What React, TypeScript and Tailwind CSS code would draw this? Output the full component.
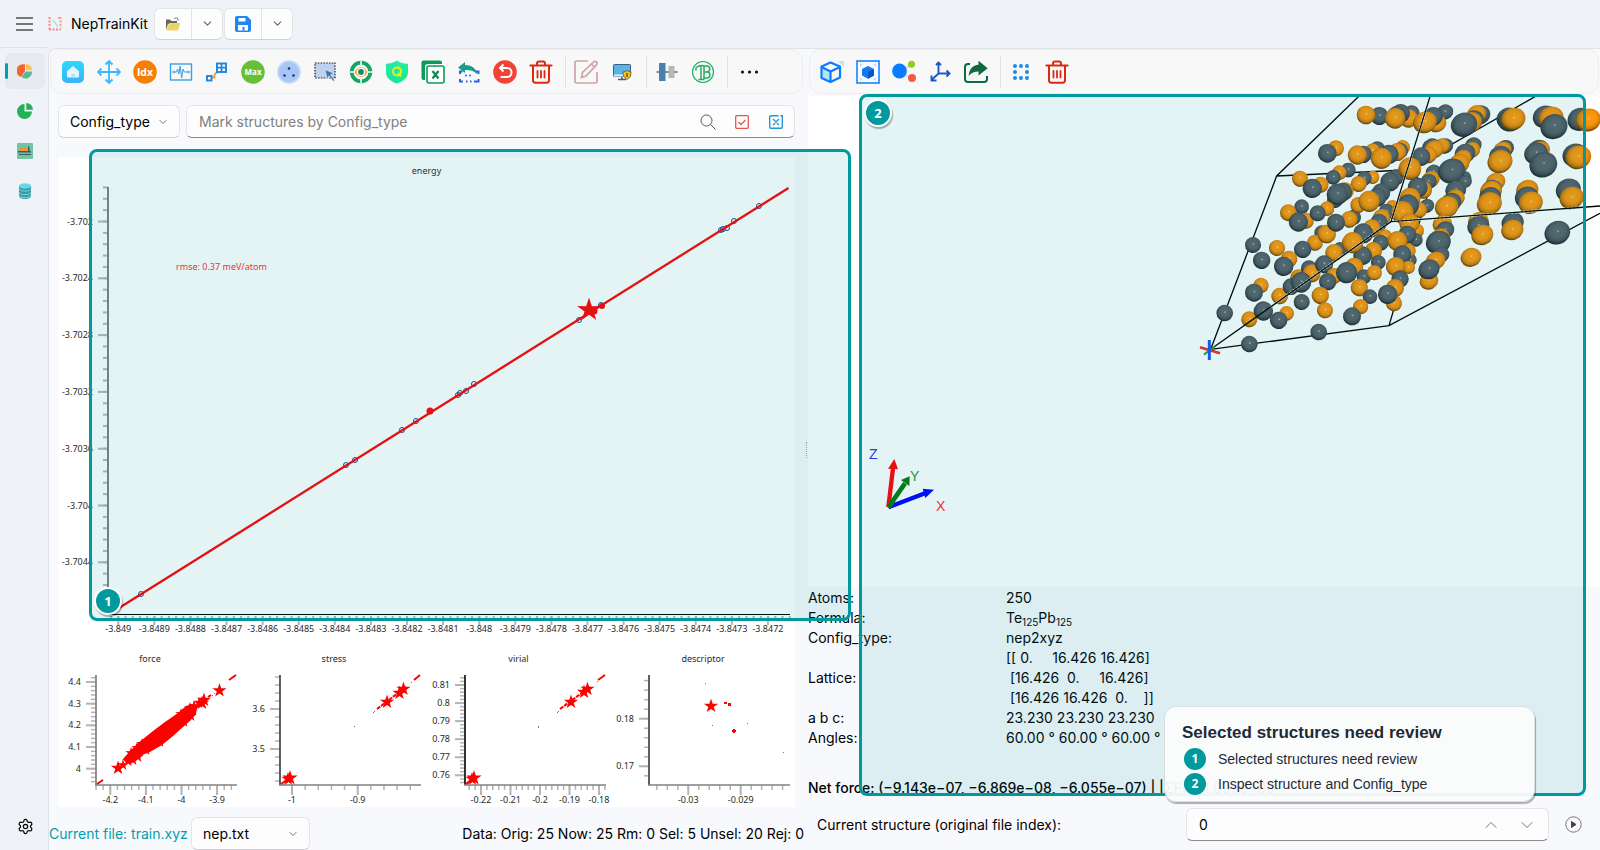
import React from "react";
import { ChevronDown, ChevronUp, Settings } from "lucide-react";

type Kids = { children: React.ReactNode };

/* ---------- icons ---------- */

function Icon({ children, size = 24 }: Kids & { size?: number }) {
  return (
    <svg width={size} height={size} viewBox="0 0 24 24" fill="none" aria-hidden="true">
      {children}
    </svg>
  );
}

const HomeIcon = () => (
  <Icon>
    <defs>
      <linearGradient id="home" x1="0" y1="0" x2="0" y2="1">
        <stop offset="0" stopColor="#2fd8fb" />
        <stop offset="1" stopColor="#37b3fb" />
      </linearGradient>
    </defs>
    <rect x="1" y="1" width="22" height="22" rx="5" fill="url(#home)" />
    <path d="M12 6l6 5.2v5.300a1 1 0 0 1-1 1H7a1 1 0 0 1-1-1v-5.300z" fill="#e2f5ff" />
    <path d="M10.500 17.500v-3.500h3v3.500z" fill="#a9e0fb" />
  </Icon>
);
const MoveIcon = () => (
  <Icon>
    <path d="M12 1v22M1 12h22M8.5 4.5L12 1l3.500 3.500M8.500 19.500L12 23l3.500-3.500M4.500 8.500L1 12l3.500 3.500M19.500 8.500L23 12l-3.500 3.500" stroke="#3db8fb" strokeWidth="1.800" />
  </Icon>
);
const IdxIcon = () => (
  <Icon>
    <circle cx="12" cy="12" r="11.800" fill="#f57f05" />
    <text x="12" y="15.500" textAnchor="middle" fontSize="10.500" fontWeight="700" fontFamily="Open Sans, sans-serif" fill="#fff">Idx</text>
  </Icon>
);
const WaveIcon = () => (
  <Icon>
    <rect x="1.500" y="4" width="21" height="16" stroke="#3c9fe0" strokeWidth="1.400" />
    <path d="M3 12h1.500M5.600 12h2l1-3 1.300 5 1.200-8 1.600 12 1.300-9 1.300 3h3.200M20 12h1.500" stroke="#3c9fe0" strokeWidth="1" />
    <circle cx="5" cy="12" r="1" stroke="#3c9fe0" strokeWidth=".8" />
    <circle cx="19.200" cy="12" r="1" stroke="#3c9fe0" strokeWidth=".8" />
  </Icon>
);
const NodeLinkIcon = () => (
  <Icon>
    <path d="M6.500 17.500h3v-3l4.500-4.500h2" stroke="#f0a020" strokeWidth="1.800" />
    <rect x="2" y="16" width="4.500" height="4.500" fill="#fff" stroke="#1f86e0" strokeWidth="1.900" />
    <rect x="12" y="3.500" width="9" height="8.500" fill="#fff" stroke="#1f86e0" strokeWidth="1.900" />
    <path d="M16.500 3.500V12M12 7.700h9" stroke="#1f86e0" strokeWidth="1.800" />
  </Icon>
);
const MaxIcon = () => (
  <Icon>
    <circle cx="12" cy="12" r="11.800" fill="#66bf36" />
    <text x="12" y="15" textAnchor="middle" fontSize="8" fontWeight="700" fontFamily="Open Sans, sans-serif" fill="#fff">Max</text>
  </Icon>
);
const DotsDiscIcon = () => (
  <Icon>
    <circle cx="12" cy="12" r="11.800" fill="#c2d6f7" />
    <circle cx="12" cy="12" r="10" fill="#a9c5f3" />
    <circle cx="12" cy="8.500" r="1.300" fill="#14318f" />
    <circle cx="7.500" cy="15.500" r="1.300" fill="#14318f" />
    <circle cx="16.500" cy="15.500" r="1.300" fill="#14318f" />
  </Icon>
);
const LassoIcon = () => (
  <Icon>
    <rect x="2" y="3" width="20" height="15" fill="#bfd0ef" stroke="#222" strokeWidth="1.200" strokeDasharray="1.500 1.300" />
    <path d="M12 9.500l9 4-3.500 1.200 4 5.500-1.300 1-4.200-5.400-1.800 3z" fill="#3d74ad" stroke="#f8f8f8" strokeWidth=".5" />
  </Icon>
);
const TargetIcon = () => (
  <Icon>
    <circle cx="12" cy="12" r="9.300" stroke="#12a862" strokeWidth="3.800" />
    <path d="M12 1v4M12 19v4M1 12h4M19 12h4" stroke="#f8f8f8" strokeWidth="1.600" />
    <path d="M5.500 12c3-6.500 10-6.500 13 0-3 6.500-10 6.500-13 0z" fill="#f9a23b" />
    <circle cx="12" cy="12" r="3.600" fill="#128c62" stroke="#fff" strokeWidth="1.400" />
  </Icon>
);
const ShieldIcon = () => (
  <Icon>
    <defs>
      <linearGradient id="shield" x1="0" y1="0" x2="1" y2="1">
        <stop offset="0" stopColor="#3df5a5" />
        <stop offset="1" stopColor="#0fe58c" />
      </linearGradient>
    </defs>
    <path d="M12 .5c2.500 2 6.500 3.500 11 3.300V12c0 6-5 9.500-11 11.500C6 21.500 1 18 1 12V3.800C5.500 4 9.500 2.500 12 .5z" fill="url(#shield)" />
    <path d="M12 .5v23C6 21.500 1 18 1 12V3.800C5.500 4 9.500 2.500 12 .5z" fill="#19d9a6" fillOpacity=".45" />
    <circle cx="12" cy="11.500" r="4" stroke="#d9f61e" strokeWidth="2" />
    <path d="M13 13l3 3.300" stroke="#d9f61e" strokeWidth="2" />
  </Icon>
);
const ExcelIcon = () => (
  <Icon>
    <path d="M.5 2.500A2 2 0 0 1 2.500.500H19a2 2 0 0 1 2 2V4H7a3 3 0 0 0-3 3v13H2.500a2 2 0 0 1-2-2z" fill="#0b9d57" />
    <rect x="6" y="6" width="17" height="17" rx="2" fill="#fff" stroke="#0b9d57" strokeWidth="1.600" />
    <path d="M11.500 11l6 7.500M17.500 11l-6 7.500" stroke="#0b8d4d" strokeWidth="2.200" />
  </Icon>
);
const FrameBackIcon = () => (
  <Icon>
    <path d="M3 14v-2.500h2.500M18 11.500h3.500V14M3 19v2.500h3M17 21.500h4.500V19M9 21.500h1.500M13 21.500h1.500" stroke="#2a63e8" strokeWidth="2" />
    <path d="M1 7.500L8 2v3c7 0 11.500 4 12.500 9.500C17.500 11 13.500 9.800 8 10v3z" fill="#1e9a8b" />
    <circle cx="9" cy="15.500" r="1" fill="#2a63e8" />
    <circle cx="13" cy="15.500" r="1" fill="#2a63e8" />
  </Icon>
);
const UndoIcon = () => (
  <Icon>
    <circle cx="12" cy="12" r="11.800" fill="#f24236" />
    <path d="M7 8h7a4.500 4.500 0 0 1 0 9H7.500" stroke="#fff" strokeWidth="2" />
    <path d="M10.500 4.500L7 8l3.500 3.500" stroke="#fff" strokeWidth="2" />
  </Icon>
);
const TrashIcon = () => (
  <Icon>
    <path d="M1.500 5.500h21" stroke="#da2a10" strokeWidth="2.200" strokeLinecap="round" />
    <path d="M8 5V3.500A2 2 0 0 1 10 1.500h4a2 2 0 0 1 2 2V5M4 6v14.500A2.200 2.200 0 0 0 6.200 22.700h11.600a2.200 2.200 0 0 0 2.200-2.200V6" stroke="#da2a10" strokeWidth="2" />
    <path d="M8.500 11v6.500M12 11v6.500M15.500 11v6.500" stroke="#da2a10" strokeWidth="1.800" strokeLinecap="round" />
  </Icon>
);
const EditIcon = () => (
  <Icon>
    <path d="M14 1H2.500A1.500 1.500 0 0 0 1 2.500v19A1.500 1.500 0 0 0 2.500 23h19a1.500 1.500 0 0 0 1.500-1.500V12" stroke="#cfa3a6" strokeWidth="1.700" />
    <path d="M7.500 17.500l1-5L19.500 2a2 2 0 0 1 3 2.800L12 16zM17.500 4l3 3" stroke="#cfa3a6" strokeWidth="1.700" />
  </Icon>
);
const MonitorIcon = () => (
  <Icon>
    <rect x="3.500" y="4.500" width="17" height="12" rx=".8" fill="#58b3ea" stroke="#3c5f80" />
    <path d="M4 14.500h16v2H4z" fill="#e8eef3" />
    <path d="M12 17v2.500M8 19.500h8" stroke="#3c5f80" strokeWidth="1.600" />
    <path d="M17 10.500c1.500 1 2.700 1.300 4 1.300 0 4-1 6-4 7.700-3-1.700-4-3.700-4-7.700 1.300 0 2.500-.3 4-1.300z" fill="#f5c018" stroke="#4b4b30" strokeWidth=".7" />
    <path d="M17 13v4" stroke="#5a4a10" strokeWidth="1.300" />
  </Icon>
);
const AlignIcon = () => (
  <Icon>
    <path d="M1.500 12h21" stroke="#6f7c88" strokeWidth="1.800" />
    <rect x="4" y="3" width="6.500" height="18" fill="#4a7fb0" />
    <rect x="13.500" y="6" width="6" height="12" fill="#b4b6b8" />
  </Icon>
);
const CurrencyIcon = () => (
  <Icon>
    <circle cx="12" cy="12" r="10.500" stroke="#1fae62" strokeWidth="1.200" />
    <path d="M5 7.500C8 5.500 10 5 13 6h3.500a3 3 0 0 1 0 5.800 3.200 3.200 0 0 1 0 6.200H13V6M10 6.500V19.500M13 12h3.500M5 7.500v3M7.500 19.500h6" stroke="#1fae62" strokeWidth="1.500" />
  </Icon>
);
const MoreIcon = () => (
  <Icon>
    <circle cx="6.500" cy="12" r="1.600" fill="#111" />
    <circle cx="13.500" cy="12" r="1.600" fill="#111" />
    <circle cx="20.500" cy="12" r="1.600" fill="#111" />
  </Icon>
);
const CubeIcon = () => (
  <Icon>
    <path d="M2 8.200l8.500 4V22L2 18z" fill="#b4e6fb" />
    <path d="M10.500 2.500l9.500 4v11L10.500 22 1.500 18V6.500z" stroke="#0a7cff" strokeWidth="2.200" strokeLinejoin="round" />
    <path d="M1.500 7l9 4.500L20 7M10.500 11.500V22" stroke="#0a7cff" strokeWidth="2.200" />
    <path d="M18 1h6v6z" fill="#b4e6fb" />
  </Icon>
);
const CubeFrameIcon = () => (
  <Icon>
    <rect x="1" y="1" width="22" height="22" fill="#f7fbff" stroke="#0a7cff" strokeWidth="1.500" />
    <path d="M4 7V4h3zM17 4h3v3zM4 17v3h3zM20 17v3h-3z" fill="#bfdcfb" />
    <path d="M12 6l6 3v6.500l-6 3.300-6-3.300V9z" fill="#1677f2" />
    <path d="M12 12v6.800l6-3.300V9z" fill="#0b55c2" />
  </Icon>
);
const MoleculeIcon = () => (
  <Icon>
    <path d="M8 11l12-7M8 11l12 8" stroke="#d5d9de" strokeWidth="1.500" />
    <circle cx="7.500" cy="11" r="7.400" fill="#0a7cff" />
    <circle cx="19.500" cy="4.300" r="3.500" fill="#8ccf1f" />
    <circle cx="20" cy="18" r="4" fill="#f4594a" />
  </Icon>
);
const AxesIcon = () => (
  <Icon>
    <path d="M10.500 3v10.500h10M10.500 13.500L4 19.500M8 5l2.500-2.500L13 5M18.500 10.500l3 3-3 3M3.500 15.500v5h5" stroke="#1d57c8" strokeWidth="1.900" />
  </Icon>
);
const ShareIcon = () => (
  <Icon>
    <path d="M6 4H4a3 3 0 0 0-3 3v12a3 3 0 0 0 3 3h16a3 3 0 0 0 3-3v-3" stroke="#0b6b3f" strokeWidth="2" />
    <path d="M14.500.8l9.200 7.400-9.200 7.300V11.500c-4 0-7 1-9.800 4.500.3-6.500 4-11 9.800-11.300z" fill="#0b6b3f" />
  </Icon>
);
const GridDotsIcon = () => (
  <Icon>
    {[
      [6, 6], [12, 6], [18, 6], [6, 12], [18, 12], [6, 18], [12, 18], [18, 18],
    ].map(([x, y]) => (
      <circle key={`${x}-${y}`} cx={x} cy={y} r="2" fill="#1f8be8" />
    ))}
  </Icon>
);

const LogoIcon = () => (
  <svg width="14" height="14" viewBox="0 0 14 14" fill="none" aria-hidden="true">
    <path d="M1.500 0v13M1 12.500h12" stroke="#f08a8a" strokeWidth="2" strokeDasharray="2 1.500" />
    <path d="M12.500 0v11M1 1h3M10 1h3" stroke="#f6a878" strokeWidth="2" strokeDasharray="2 1.500" />
    <path d="M5 3l2 3 1 1 2 3" stroke="#b9d8ee" strokeWidth="1.500" />
  </svg>
);
const FolderIcon = () => (
  <svg width="16" height="16" viewBox="0 0 16 16" aria-hidden="true">
    <path d="M1 3.500h4l1.500 1.500H12v3H3l-2 6z" fill="#6b6b55" />
    <path d="M4 7h11.300L13 14.500H1.500z" fill="#ecd368" />
    <path d="M9 3c1.500-1.500 3-1.500 4 0v1.800" stroke="#777" fill="none" />
  </svg>
);
const SaveIcon = () => (
  <svg width="16" height="16" viewBox="0 0 16 16" aria-hidden="true">
    <path d="M2 0h10l4 4v10a2 2 0 0 1-2 2H2a2 2 0 0 1-2-2V2a2 2 0 0 1 2-2z" fill="#1f86f2" />
    <path d="M3.500 2h7v3.500h-7zM3 9h10v5.500H3z" fill="#fff" />
    <path d="M7.500 11h2v3.500h-2z" fill="#1f86f2" />
  </svg>
);
const PieMultiIcon = () => (
  <svg width="16" height="16" viewBox="0 0 16 16" aria-hidden="true">
    <path d="M8 8L8 1.500A6.500 6.500 0 0 0 4 14z" fill="#f5642a" />
    <path d="M9 7V1a6 6 0 0 1 6 6z" fill="#fcc04f" />
    <path d="M8.500 8.500H15A6.500 6.500 0 0 1 4.500 14z" fill="#57b894" />
  </svg>
);
const PieGreenIcon = () => (
  <svg width="16" height="16" viewBox="0 0 16 16" aria-hidden="true">
    <path d="M7.500 1v7.500H15A7.500 7.500 0 1 1 7.500 1z" fill="#21b257" />
    <path d="M9.300 0a7 7 0 0 1 6.700 6.800H9.300z" fill="#21b257" />
  </svg>
);
const ImageIcon = () => (
  <svg width="16" height="16" viewBox="0 0 16 16" aria-hidden="true">
    <rect width="16" height="16" rx="1" fill="#72c4a4" />
    <path d="M2.500 4.500h3.500v3.500h-3.500zM6.500 4.500h3.500v3.500H6.500z" fill="#e8963c" />
    <path d="M1 8h13v1.500H1zM2 11h12v1H2zM11 3.500h1.500V8H11z" fill="#3b5b5b" />
  </svg>
);
const DatabaseIcon = () => (
  <svg width="16" height="16" viewBox="0 0 16 16" aria-hidden="true">
    <path d="M2 3v10c0 4 12 4 12 0V3z" fill="#3a9ba4" />
    <path d="M2 5.500c0 3.500 12 3.500 12 0M2 9c0 3.500 12 3.500 12 0M2 12c0 3.500 12 3.500 12 0" fill="none" stroke="#7fd3da" />
    <ellipse cx="8" cy="3" rx="6" ry="2.800" fill="#63d8e6" />
  </svg>
);

/* ---------- toolbars ---------- */

type Tool = [string, () => React.ReactElement] | null;

const leftTools: Tool[] = [
  ["Reset view", HomeIcon], ["Pan", MoveIcon], ["Select by index", IdxIcon], ["Select by range", WaveIcon],
  ["Sparse samples", NodeLinkIcon], ["Max error", MaxIcon], ["Find points", DotsDiscIcon], ["Lasso", LassoIcon],
  ["Focus", TargetIcon], ["Check quality", ShieldIcon], ["Export table", ExcelIcon], ["Invert selection", FrameBackIcon],
  ["Undo", UndoIcon], ["Delete", TrashIcon], null, ["Edit", EditIcon], ["Display", MonitorIcon], null,
  ["Align", AlignIcon], ["Baseline", CurrencyIcon], null, ["More", MoreIcon],
];
const rightTools: Tool[] = [
  ["View cube", CubeIcon], ["Fit cell", CubeFrameIcon], ["Bonds", MoleculeIcon], ["Axes", AxesIcon],
  ["Export", ShareIcon], null, ["Supercell", GridDotsIcon], ["Remove", TrashIcon],
];

function Toolbar({ tools, label }: { tools: Tool[]; label: string }) {
  return (
    <div role="toolbar" aria-label={label} className="mx-px flex h-[45px] items-center gap-1 rounded-xl border border-[#eceef0] bg-[#f8f8f8] pl-1.5">
      {tools.map((t, i) => {
        if (!t) return <span key={i} className="ml-1 h-8 w-px bg-[#e2e2e2]" />;
        const [name, Glyph] = t;
        return (
          <button key={i} aria-label={name} className="flex size-8 items-center justify-center">
            <Glyph />
          </button>
        );
      })}
    </div>
  );
}

/* ---------- plots ---------- */

const star = (cx: number, cy: number, r: number) =>
  Array.from({ length: 10 }, (_, i) => {
    const a = (Math.PI / 5) * i - Math.PI / 2;
    const k = i % 2 ? r * 0.38 : r;
    return `${(cx + k * Math.cos(a)).toFixed(1)},${(cy + k * Math.sin(a)).toFixed(1)}`;
  }).join(" ");

type AxisProps = {
  x: number; right: number; top: number; bottom: number;
  y0: number; yStep: number; yLabels: string[]; yMinor: number;
  x0: number; xStep: number; xLabels: string[]; xMinor: number;
  axisColor?: string;
};

const span = (origin: number, step: number, from: number, to: number) => {
  const out: number[] = [];
  for (let k = Math.ceil((from - origin) / step); origin + k * step <= to; k++) out.push(origin + k * step);
  return out;
};

function Axes(p: AxisProps) {
  return (
    <g>
      <g stroke="#b4b4b4" strokeWidth="1.500">
        {span(p.y0, p.yStep / p.yMinor, p.top, p.bottom).map((y) => (
          <path key={y} d={`M${p.x - 5} ${y}H${p.x}`} />
        ))}
        {p.yLabels.map((l, i) => (
          <path key={l} d={`M${p.x - 10} ${p.y0 + i * p.yStep}H${p.x}`} strokeWidth="2" />
        ))}
        {span(p.x0, p.xStep / p.xMinor, p.x, p.right).map((x) => (
          <path key={x} d={`M${x} ${p.bottom}V${p.bottom + 5}`} />
        ))}
        {p.xLabels.map((l, i) => (
          <path key={l} d={`M${p.x0 + i * p.xStep} ${p.bottom}v10`} strokeWidth="2" />
        ))}
      </g>
      <path d={`M${p.x} ${p.top}V${p.bottom}`} stroke={p.axisColor ?? "#808080"} strokeWidth="1.700" />
      <path d={`M${p.x - 1} ${p.bottom}H${p.right}`} stroke="#808080" strokeWidth="1.700" />
      <g fill="#2a2a2a">
        {p.yLabels.map((l, i) => (
          <text key={l} x={p.x - 15} y={p.y0 + i * p.yStep + 3} textAnchor="end">{l}</text>
        ))}
        {p.xLabels.map((l, i) => (
          <text key={l} x={p.x0 + i * p.xStep} y={p.bottom + 18} textAnchor="middle">{l}</text>
        ))}
      </g>
    </g>
  );
}

const blueMarks = [
  [141, 594], [346, 465], [355, 460], [402, 430], [416, 421], [458, 395], [460, 393], [466, 391],
  [474, 384], [579, 320], [601, 305], [721, 230], [723, 229], [727, 228], [734, 221], [759, 206],
];
const energyX = Array.from({ length: 19 }, (_, i) => String(Number((-3.849 + i * 0.0001).toFixed(4))));
const energyY = ["-3.702", "-3.7024", "-3.7028", "-3.7032", "-3.7036", "-3.704", "-3.7044"];

function Plots() {
  return (
    <svg viewBox="58 157 737 650" className="block h-auto w-full bg-white font-['Noto_Sans',sans-serif] text-[9px]" role="img" aria-label="Training result plots">
      <g stroke="#b4b4b4" strokeWidth="2">
        {span(221.5, 11.36, 187, 610).map((y) => <path key={y} d={`M103 ${y}h5`} />)}
        {energyY.map((l, i) => <path key={l} d={`M98 ${221.5 + i * 56.8}h10`} />)}
        {span(118.3, 7.22, 110, 791).map((x) => <path key={x} d={`M${x} 616v3`} />)}
        {energyX.map((l, i) => <path key={l} d={`M${118.3 + i * 36.09} 616v9`} />)}
      </g>
      <path d="M108 187V614" stroke="#808080" strokeWidth="2" />
      <path d="M108 614.500H790" stroke="#000" />
      <g fill="#2a2a2a">
        {energyY.map((l, i) => <text key={l} x="93" y={224.5 + i * 56.8} textAnchor="end">{l}</text>)}
        {energyX.map((l, i) => <text key={l} x={118.3 + i * 36.09} y="632" textAnchor="middle">{l}</text>)}
        <g textAnchor="middle">
          <text x="426.500" y="174">energy</text>
          <text x="150" y="662">force</text>
          <text x="334" y="662">stress</text>
          <text x="518.500" y="662">virial</text>
          <text x="703" y="662">descriptor</text>
        </g>
      </g>
      <text x="176" y="270" fill="#ff2a2a">rmse: 0.37 meV/atom</text>
      {blueMarks.map(([x, y], i) => <circle key={i} cx={x} cy={y} r="2.500" fill="none" stroke="#0a4a98" strokeWidth="1" />)}
      <path d="M119 608L788.500 188" stroke="#ff0000" strokeWidth="2.300" />
      <g fill="#ff0000">
        <circle cx="430" cy="411" r="3.500" />
        <circle cx="602" cy="306" r="3" />
        <circle cx="594" cy="311" r="3.500" />
        <polygon points={star(589, 310, 12.5)} />
      </g>

      <Axes x={96} right={237} top={675} bottom={785} y0={682} yStep={21.67} yMinor={5} yLabels={["4.4", "4.3", "4.2", "4.1", "4"]} x0={110.3} xStep={35.6} xMinor={5} xLabels={["-4.2", "-4.1", "-4", "-3.9"]} />
      <Axes x={280} right={421} top={675} bottom={785} y0={709} yStep={40} yMinor={5} yLabels={["3.6", "3.5"]} x0={292} xStep={65.7} xMinor={5} xLabels={["-1", "-0.9"]} axisColor="#444" />
      <Axes x={465} right={606} top={675} bottom={785} y0={685} yStep={18.06} yMinor={5} yLabels={["0.81", "0.8", "0.79", "0.78", "0.77", "0.76"]} x0={481} xStep={29.5} xMinor={5} xLabels={["-0.22", "-0.21", "-0.2", "-0.19", "-0.18"]} axisColor="#111" />
      <Axes x={649} right={790} top={675} bottom={785} y0={718.7} yStep={47.6} yMinor={5} yLabels={["0.18", "0.17"]} x0={688.3} xStep={52.4} xMinor={5} xLabels={["-0.03", "-0.029"]} axisColor="#444" />

      <g fill="#f00" stroke="none">
        <path d="M123 759L130 751L138 743L153 731L165 722L178 713L186 706L192 704L197 706L196 714L190 721L183 727L173 736L162 745L150 752L142 755L134 761L127 764z" />
        {[[123, 765], [128, 761], [133, 760], [138, 757], [131, 753], [137, 748], [146, 750], [142, 744], [190, 708], [194, 706], [191, 716], [184, 722], [181, 714], [160, 742], [199, 703]].map(([x, y]) => (
          <polygon key={`${x}-${y}`} points={star(x, y, 6)} />
        ))}
        {[[118, 768], [219.5, 690.5], [204, 700], [202, 703], [387, 702], [399.5, 693], [403.5, 689], [571, 702], [584, 692], [587.5, 689], [711, 706]].map(([x, y]) => (
          <polygon key={`${x}-${y}`} points={star(x, y, 7.5)} />
        ))}
        <polygon points={star(290, 778, 8)} />
        <polygon points={star(288, 779, 7)} />
        <polygon points={star(474, 778, 8)} />
        <polygon points={star(472, 779, 7)} />
        <path d="M724 702h3v2h-3zM728 703h3v3h-3zM732 730h4v2h-4zM733 729h2v4h-2z" />
      </g>
      <g stroke="#f00" strokeWidth="2">
        <path d="M97 784L103 780M229 680L236 675M196 708L204 700M208 697L211 695M281 784L288 779M414 680L420 675M466 784L472 779M598 680L605 675" />
        <path d="M377 709L406 687M560 709L590 687" strokeDasharray="4 1" />
      </g>
      <g fill="#3a86c8">
        <path d="M212 695h1v1h-1zM214 693h1v1h-1zM102 779h1v1h-1zM354 726h1v1h-1zM373 712h1v1h-1zM374 711h1v1h-1zM411 682h1v1h-1zM538 726h1v2h-1zM557 712h1v1h-1zM558 711h1v1h-1zM597 681h1v1h-1zM705 683h1v1h-1zM712 725h1v1h-1zM747 723h1v1h-1zM783 752h1v1h-1z" />
      </g>
    </svg>
  );
}

/* ---------- structure view ---------- */

type Atom = ["o" | "g", number, number, number];

const atoms: Atom[] = [
  ["g", 568, 78, 27], ["g", 665, 70, 24], ["o", 655, 85, 28], ["g", 632, 70, 28], ["o", 528, 75, 28], ["g", 620, 78, 30], ["o", 615, 85, 31],
  ["g", 765, 66, 24], ["o", 740, 100, 28], ["g", 728, 80, 30], ["o", 705, 97, 34], ["g", 870, 75, 30], ["o", 860, 72, 28], ["g", 850, 90, 30], ["o", 843, 97, 32],
  ["g", 822, 104, 38], ["g", 955, 85, 34], ["g", 962, 90, 36], ["o", 970, 87, 35], ["g", 1065, 80, 35], ["o", 1083, 84, 36], ["g", 1092, 110, 39], ["g", 1170, 88, 36], ["o", 1195, 90, 36],
  ["o", 438, 175, 24], ["g", 412, 190, 28], ["g", 562, 178, 24], ["o", 548, 182, 22], ["g", 520, 193, 26], ["o", 502, 195, 29],
  ["o", 638, 172, 22], ["g", 630, 182, 24], ["o", 622, 186, 27], ["g", 597, 193, 29], ["o", 574, 205, 32],
  ["g", 475, 240, 22], ["o", 448, 248, 22], ["g", 430, 262, 22], ["o", 330, 266, 24], ["o", 392, 284, 24], ["g", 367, 295, 29],
  ["o", 548, 262, 20], ["g", 523, 265, 22], ["o", 506, 282, 24], ["o", 465, 303, 26], ["g", 458, 306, 28], ["g", 435, 330, 24], ["g", 442, 313, 32],
  ["g", 335, 350, 22], ["o", 295, 368, 25], ["o", 348, 392, 24], ["g", 325, 396, 29],
  ["o", 411, 356, 22], ["g", 383, 370, 24], ["g", 395, 428, 22], ["o", 375, 458, 24], ["o", 410, 432, 28], ["g", 490, 382, 23], ["o", 478, 388, 25], ["g", 438, 398, 27],
  ["g", 618, 262, 24], ["g", 600, 275, 29], ["g", 573, 308, 28], ["o", 505, 345, 24], ["g", 562, 322, 28], ["o", 537, 334, 32],
  ["o", 608, 350, 20], ["g", 590, 365, 24], ["o", 575, 383, 26], ["g", 567, 397, 26], ["o", 545, 415, 27], ["g", 520, 430, 30],
  ["o", 585, 440, 22], ["g", 572, 458, 24], ["o", 550, 482, 26], ["g", 565, 517, 22], ["g", 518, 497, 28], ["g", 450, 478, 22], ["o", 488, 458, 32], ["o", 432, 488, 26],
  ["g", 338, 478, 26], ["g", 189, 465, 24], ["o", 261, 474, 24], ["g", 215, 511, 26], ["o", 297, 507, 25], ["g", 281, 529, 29],
  ["g", 765, 168, 24], ["o", 755, 168, 24], ["g", 725, 172, 28], ["o", 733, 178, 28], ["o", 715, 195, 26], ["g", 693, 200, 28], ["o", 650, 240, 26], ["o", 660, 236, 34],
  ["g", 730, 245, 22], ["o", 722, 268, 26], ["g", 715, 275, 24], ["o", 700, 300, 26], ["g", 683, 293, 30], ["g", 710, 348, 22], ["o", 687, 360, 24], ["o", 660, 325, 32], ["g", 655, 345, 32], ["o", 637, 367, 34],
  ["o", 680, 422, 22], ["o", 658, 400, 30], ["g", 678, 450, 20], ["g", 652, 434, 27], ["g", 660, 510, 20], ["o", 655, 482, 22], ["o", 622, 453, 30], ["g", 637, 493, 27],
  ["o", 655, 532, 20], ["o", 617, 530, 29], ["g", 630, 567, 26], ["o", 615, 594, 27], ["o", 612, 640, 24], ["g", 593, 613, 29],
  ["g", 850, 165, 24], ["o", 845, 180, 25], ["g", 825, 190, 30], ["o", 818, 205, 26], ["g", 820, 265, 23], ["o", 808, 220, 30], ["g", 785, 243, 39],
  ["g", 825, 275, 20], ["o", 800, 300, 28], ["g", 797, 300, 30], ["o", 795, 325, 28], ["g", 783, 337, 30], ["o", 770, 351, 34],
  ["o", 757, 402, 28], ["g", 765, 420, 27], ["o", 750, 442, 28], ["g", 745, 457, 36], ["g", 752, 495, 25], ["o", 737, 512, 28], ["o", 717, 573, 27], ["g", 717, 538, 31],
  ["g", 945, 175, 26], ["o", 938, 180, 26], ["g", 930, 198, 32], ["o", 930, 215, 36], ["o", 917, 275, 28], ["g", 905, 298, 30], ["o", 903, 303, 32], ["g", 900, 322, 32], ["o", 898, 341, 36],
  ["o", 865, 395, 30], ["g", 865, 408, 32], ["o", 877, 435, 32], ["g", 968, 398, 32], ["o", 967, 420, 32], ["o", 843, 502, 30], ["g", 1102, 428, 37],
  ["g", 1045, 180, 32], ["o", 1052, 180, 27], ["g", 1038, 190, 34], ["g", 1060, 224, 40], ["g", 1155, 195, 36], ["o", 1165, 202, 37],
  ["o", 1012, 300, 32], ["g", 1010, 322, 34], ["o", 1022, 338, 35], ["g", 1135, 300, 36], ["o", 1145, 324, 35],
  ["o", 213, 586, 23], ["g", 192, 608, 27], ["g", 104, 669, 25], ["o", 269, 618, 25], ["o", 325, 562, 24], ["g", 303, 590, 25], ["g", 357, 535, 24], ["o", 365, 550, 27], ["g", 333, 577, 31],
  ["g", 402, 523, 27], ["o", 432, 558, 24], ["g", 413, 575, 26], ["o", 493, 530, 27], ["g", 470, 548, 32], ["g", 522, 560, 22], ["o", 553, 548, 23], ["o", 508, 593, 26],
  ["g", 540, 620, 22], ["o", 512, 650, 23], ["g", 486, 679, 27], ["o", 391, 616, 26], ["o", 405, 661, 24], ["g", 335, 636, 24], ["o", 178, 688, 24], ["g", 220, 663, 29],
  ["o", 290, 670, 22], ["g", 266, 691, 26], ["g", 178, 762, 25], ["g", 386, 726, 25],
];

function StructureView() {
  return (
    <svg viewBox="808 96 792 491" className="block h-auto w-full bg-white font-['Liberation_Sans',sans-serif] text-[14px]" role="img" aria-label="Atomic structure">
      <defs>
        <radialGradient id="o" cx=".56" cy=".44" r=".6">
          <stop offset="0" stopColor="#ff9c10" />
          <stop offset=".5" stopColor="#f89208" />
          <stop offset=".75" stopColor="#d07a06" />
          <stop offset="1" stopColor="#4a2c00" />
        </radialGradient>
        <radialGradient id="g" cx=".56" cy=".44" r=".6">
          <stop offset="0" stopColor="#5f666d" />
          <stop offset=".5" stopColor="#575e66" />
          <stop offset=".75" stopColor="#444a51" />
          <stop offset="1" stopColor="#14171b" />
        </radialGradient>
      </defs>
      <g transform="translate(1190 90) scale(.33333)">
        <path d="M62 778L260 258L505 20M62 778L597 707L1230 370M260 258L650 240L1035 20M597 707L720 290M650 240L720 290" fill="none" stroke="#000" strokeWidth="4" />
        {atoms.map(([c, x, y, r], i) => (
          <g key={i} transform={`translate(${x} ${y}) rotate(-25)`}>
            <ellipse rx={x > 700 ? r * 1.06 : r} ry={x > 700 ? r * 0.94 : r} fill={c === "o" ? "url(#o)" : "url(#g)"} />
            <circle cx={r * 0.1} cy={r * -0.08} r="2.500" fill={c === "o" ? "#ffd070" : "#a8b4bc"} />
          </g>
        ))}
        <path d="M240 652L603 395M603 395L720 20M603 395L1180 352" stroke="#fff" strokeWidth="7" strokeDasharray="9 3" />
        <path d="M62 778L603 395M603 395L720 20M603 395L1230 348" stroke="#000" strokeWidth="4" />
        <path d="M30 772L90 790" stroke="#f02a20" strokeWidth="8" />
        <path d="M42 794L76 768" stroke="#16a83a" strokeWidth="6" />
        <path d="M58 750V810" stroke="#1c50ff" strokeWidth="9" />
      </g>
      <g transform="translate(800 430) scale(.33333)">
        <path d="M265 232L279 115" stroke="#ff0000" strokeWidth="13" />
        <path d="M283 87L264 116L294 118z" fill="#ff0000" />
        <path d="M265 232L375 190" stroke="#0000ff" strokeWidth="13" />
        <path d="M402 179L368 176L376 204z" fill="#0000ff" />
        <path d="M265 232L315 160" stroke="#007a08" strokeWidth="14" />
        <path d="M329 139L303 150L328 168z" fill="#007a08" />
      </g>
      <text x="869" y="459" fill="#2a2aff">Z</text>
      <text x="910" y="481" fill="#159a2a">Y</text>
      <text x="936" y="511" fill="#ff2a2a">X</text>
    </svg>
  );
}

/* ---------- small parts ---------- */

const box = "rounded-md border border-[#e3e4e8] bg-[#fdfdfd]";

function Combo({ id, label, value, className }: { id: string; label: string; value: string; className: string }) {
  return (
    <div className={`relative flex h-[33px] items-center ${box} border-b-[#d0d0d4] ${className}`}>
      <label htmlFor={id} className="sr-only">{label}</label>
      <select id={id} className="h-full w-full appearance-none bg-transparent pl-[11px] text-black outline-none">
        <option>{value}</option>
      </select>
      <ChevronDown size={12} strokeWidth={2} className="pointer-events-none absolute right-2.5 text-[#777]" />
    </div>
  );
}

function SplitButton({ name, children }: Kids & { name: string }) {
  return (
    <div className={`flex h-8 ${box} border-b-[#cfd2d8]`}>
      <button aria-label={name} className="flex w-[37px] items-center justify-center border-r border-[#e3e4e8]">{children}</button>
      <button aria-label={`${name} options`} className="flex w-[30px] items-center justify-center text-[#666]">
        <ChevronDown size={13} />
      </button>
    </div>
  );
}

function Info({ label, children, tall }: Kids & { label: string; tall?: boolean }) {
  return (
    <tr className={tall ? "h-[60px]" : "h-5"}>
      <th scope="row" className="w-1/4 text-left align-middle font-normal">{label}</th>
      <td className="whitespace-pre">{children}</td>
    </tr>
  );
}

const badge = "flex items-center justify-center rounded-full bg-[#009a9e] font-['Open_Sans',sans-serif] font-bold text-white";
const region = "pointer-events-none absolute rounded-lg border-[3px] border-[#009a9e] bg-[#009a9e]/[0.106]";

export default function App() {
  return (
    <div className="relative flex min-h-screen flex-col overflow-hidden bg-[#eff3f8] font-[Inter,sans-serif] text-[14px] leading-5 text-black">
      <header className="flex h-[47px] items-center">
        <button aria-label="Menu" className="ml-4 flex h-8 w-[17px] flex-col items-center justify-center gap-1">
          <span className="h-0.5 w-full bg-[#777]" />
          <span className="h-0.5 w-full bg-[#777]" />
          <span className="h-0.5 w-full bg-[#777]" />
        </button>
        <span className="ml-[15px]"><LogoIcon /></span>
        <h1 className="ml-[9px] w-[83px]">NepTrainKit</h1>
        <div className="flex gap-px">
          <SplitButton name="Open"><FolderIcon /></SplitButton>
          <SplitButton name="Save"><SaveIcon /></SplitButton>
        </div>
      </header>

      <div className="flex flex-1">
        <nav className="flex w-12 shrink-0 flex-col items-start gap-1 border-t border-[#dfe3e8] pb-2 pl-[5px] pt-[5px]">
          <button aria-label="Results" className="relative flex h-9 w-10 items-center justify-center rounded-md bg-[#e6e9ee]">
            <span className="absolute left-0 h-4 w-[3px] rounded bg-[#009faa]" />
            <PieMultiIcon />
          </button>
          <button aria-label="Charts" className="flex h-9 w-10 items-center justify-center"><PieGreenIcon /></button>
          <button aria-label="Cards" className="flex h-9 w-10 items-center justify-center"><ImageIcon /></button>
          <button aria-label="Data" className="flex h-9 w-10 items-center justify-center"><DatabaseIcon /></button>
          <button aria-label="Settings" className="mt-auto flex h-8 w-10 items-center justify-center"><Settings size={17} strokeWidth={1.7} /></button>
        </nav>

        <main className="mt-px flex min-w-0 flex-1 rounded-tl-lg border-l border-t border-[#dfe3e8] bg-[#f8f9fd]">
          <section className="min-w-0 flex-[755]">
            <Toolbar tools={leftTools} label="Plot tools" />
            <div className="mt-[11px] flex gap-1.5 px-[9px]">
              <Combo id="field" label="Field" value="Config_type" className="w-[122px] shrink-0" />
              <div className={`flex h-[33px] flex-1 items-center pl-3 pr-[11px] ${box} border-b-[#8c8c8c]`}>
                <label htmlFor="query" className="sr-only">Search</label>
                <input id="query" placeholder="Mark structures by Config_type" className="h-full min-w-0 flex-1 bg-transparent outline-none placeholder:text-[#808080]" />
                <button aria-label="Search" className="mr-[19px]">
                  <svg width="16" height="16" viewBox="0 0 16 16" fill="none" stroke="#555" aria-hidden="true">
                    <circle cx="6.500" cy="6.500" r="5.500" />
                    <path d="M10.500 10.500L15.500 15.500" />
                  </svg>
                </button>
                <button aria-label="Select matches" className="mr-5">
                  <svg width="14" height="14" viewBox="0 0 14 14" fill="none" stroke="#e2574c" strokeWidth="1.300" aria-hidden="true">
                    <rect x=".7" y=".7" width="12.600" height="12.600" rx="1" />
                    <path d="M3.500 7l2.500 2.500L10.500 5" />
                  </svg>
                </button>
                <button aria-label="Clear matches">
                  <svg width="14" height="14" viewBox="0 0 14 14" fill="none" stroke="#1e96dc" strokeWidth="1.400" aria-hidden="true">
                    <path d="M9.500 .7H2A1.300 1.300 0 0 0 .7 2v10A1.300 1.300 0 0 0 2 13.300h10a1.300 1.300 0 0 0 1.300-1.300V2M11.500 .7h1.800V2M4 4l6 6M10 4l-6 6" />
                  </svg>
                </button>
              </div>
            </div>
            <div className="mt-[19px] px-[9px]">
              <Plots />
            </div>
            <footer className="mt-2.5 flex items-center">
              <span className="w-[142px] whitespace-nowrap text-[#009faa]">Current file: train.xyz</span>
              <Combo id="model" label="Model" value="nep.txt" className="w-[119px]" />
              <span className="ml-auto whitespace-nowrap">Data: Orig: 25 Now: 25 Rm: 0 Sel: 5 Unsel: 20 Rej: 0</span>
            </footer>
          </section>

          <div className="flex w-1 items-center justify-center">
            <span className="h-4 border-l border-dotted border-[#aaa]" />
          </div>

          <section className="min-w-0 flex-[792]">
            <Toolbar tools={rightTools} label="Structure tools" />
            <div className="mt-0.5"><StructureView /></div>
            <table className="mt-px w-full border-collapse">
              <tbody>
                <Info label="Atoms:">250</Info>
                <Info label="Formula:">Te<sub className="text-[10px] leading-none">125</sub>Pb<sub className="text-[10px] leading-none">125</sub></Info>
                <Info label="Config_type:">nep2xyz</Info>
                <Info label="Lattice:" tall>{"[[ 0.     16.426 16.426]\n [16.426  0.     16.426]\n [16.426 16.426  0.    ]]"}</Info>
                <Info label="a b c:">23.230 23.230 23.230</Info>
                <Info label="Angles:">60.00 ° 60.00 ° 60.00 °</Info>
              </tbody>
            </table>
            <p className="mt-[30px] whitespace-nowrap font-medium">Net force: (−9.143e−07, −6.869e−08, −6.055e−07) | |ΣF| = 1.099e−06</p>
            <div className="mt-2.5 flex items-center pl-[9px] pr-[18px]">
              <label htmlFor="index" className="w-[369px]">Current structure (original file index):</label>
              <div className={`flex h-[33px] flex-1 items-center pr-[11px] text-[#777] ${box} border-b-[#8c8c8c]`}>
                <input id="index" defaultValue="0" className="h-full min-w-0 flex-1 bg-transparent pl-3 text-black outline-none" />
                <button aria-label="Previous" className="mr-4"><ChevronUp size={20} strokeWidth={1.2} /></button>
                <button aria-label="Next"><ChevronDown size={20} strokeWidth={1.2} /></button>
              </div>
              <button aria-label="Play" className="ml-4">
                <svg width="17" height="17" viewBox="0 0 17 17" fill="none" aria-hidden="true">
                  <circle cx="8.500" cy="8.500" r="7.700" stroke="#777" />
                  <path d="M6.500 5.500L11 8.500L6.500 11.500z" fill="#444" stroke="#444" strokeLinejoin="round" />
                </svg>
              </button>
            </div>
          </section>
        </main>
      </div>

      <div className={`${region} left-[89px] top-[149px] h-[472px] w-[762px]`} />
      <div className={`${region} left-[859px] top-[94px] h-[702px] w-[727px]`} />
      <span className={`${badge} absolute left-[94px] top-[587px] size-7 border-2 border-white text-[13px] shadow-[1px_2px_1px_rgba(0,0,0,0.3)]`}>1</span>
      <span className={`${badge} absolute left-[864px] top-[99px] size-7 border-2 border-white text-[13px] shadow-[1px_2px_1px_rgba(0,0,0,0.3)]`}>2</span>

      <aside className="absolute left-[1164px] top-[706px] w-[371px] rounded-xl border border-[#d8dee2] bg-[#fbfcfc]/95 pb-[5px] pl-[17px] pt-[14px] font-['Liberation_Sans',sans-serif] text-[#1f2937] shadow-[1px_2px_1px_rgba(0,0,0,0.3)]">
        <h2 className="text-[17px] font-bold leading-6">Selected structures need review</h2>
        <ol className="mt-px">
          <li className="flex h-[25px] items-center gap-3"><span className={`${badge} ml-0.5 size-[22px] text-[12px]`}>1</span>Selected structures need review</li>
          <li className="flex h-[25px] items-center gap-3"><span className={`${badge} ml-0.5 size-[22px] text-[12px]`}>2</span>Inspect structure and Config_type</li>
        </ol>
      </aside>
    </div>
  );
}
